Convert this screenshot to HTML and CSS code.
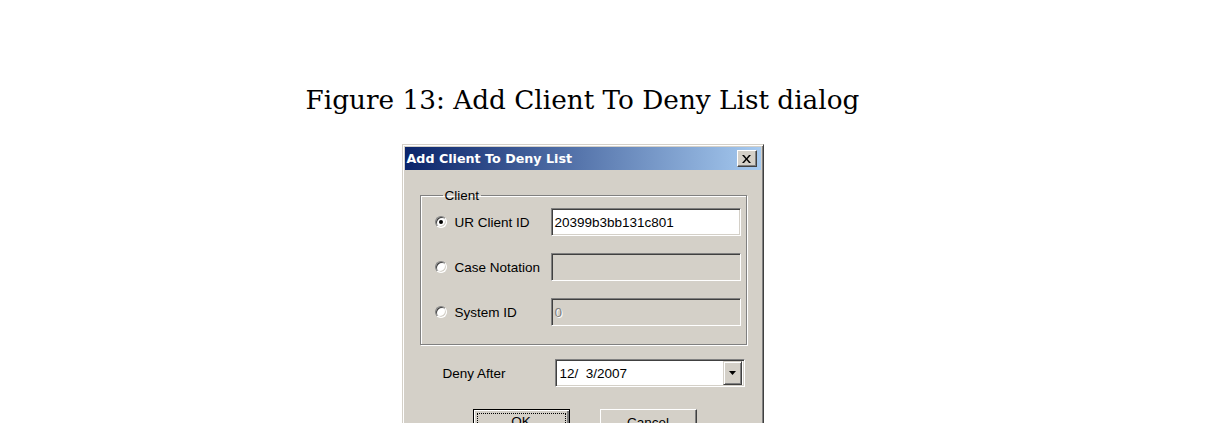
FILE: index.html
```html
<!DOCTYPE html>
<html lang="en">
<head>
    <meta charset="UTF-8">
    <title>Figure 13: Add Client To Deny List dialog</title>
    <link rel="stylesheet" href="styles.css">
</head>
<body>
    <div class="page">
        <p class="caption">Figure 13: Add Client To Deny List dialog</p>

        <div class="dialog">
            <div class="titlebar">
                <span class="title">Add Client To Deny List</span>
                <span class="close-btn">
                    <svg width="9" height="8" viewBox="0 0 9 8">
                        <path d="M0 0h2l2.5 3 2.5-3h2L5.5 4 9 8H7L4.5 5 2 8H0l3.5-4z" fill="#000"/>
                    </svg>
                </span>
            </div>

            <div class="dialog-body">
                <fieldset class="group">
                    <legend>Client</legend>

                    <div class="row">
                        <label class="option"><span class="radio checked"></span>UR Client ID</label>
                        <div class="field">20399b3bb131c801</div>
                    </div>
                    <div class="row">
                        <label class="option"><span class="radio"></span>Case Notation</label>
                        <div class="field disabled"></div>
                    </div>
                    <div class="row">
                        <label class="option"><span class="radio"></span>System ID</label>
                        <div class="field disabled"><span class="greyed">0</span></div>
                    </div>
                </fieldset>

                <div class="deny-row">
                    <span class="deny-label">Deny After</span>
                    <div class="field date">
                        <span class="date-text">12/&nbsp; 3/2007</span>
                        <span class="drop-btn">
                            <svg width="7" height="4" viewBox="0 0 7 4"><path d="M0 0h7L3.5 4z" fill="#000"/></svg>
                        </span>
                    </div>
                </div>

                <div class="buttons">
                    <button class="btn default" type="button"><span class="focus">OK</span></button>
                    <button class="btn" type="button">Cancel</button>
                </div>
            </div>
        </div>
    </div>
</body>
</html>
```

FILE: styles.css
```css
body {
    margin: 0;
    background: #fff;
}
.page {
    width: 1165px;
    padding-top: 85px;
}
.caption {
    margin: 0 0 29px;
    font-family: "DejaVu Serif", serif;
    font-size: 26.3px;
    line-height: 30px;
    text-align: center;
    color: #000;
}
.dialog {
    width: 362px;
    margin: 0 auto;
    box-sizing: border-box;
    background: #d4d0c8;
    border: 1px solid;
    border-color: #d4d0c8 #404040 #404040 #d4d0c8;
    box-shadow: inset 1px 1px 0 #fff, inset -1px -1px 0 #808080;
    padding: 2px;
    font-family: "Liberation Sans", Arial, sans-serif;
    font-size: 13.5px;
    color: #000;
}
.titlebar {
    height: 23px;
    display: flex;
    align-items: center;
    justify-content: space-between;
    padding: 0 4px 0 2px;
    background: linear-gradient(to right, #0a246a, #a6caf0);
}
.title {
    font-family: "DejaVu Sans", sans-serif;
    font-weight: bold;
    font-size: 12.7px;
    color: #fff;
}
.close-btn {
    width: 20px;
    height: 17px;
    box-sizing: border-box;
    display: flex;
    align-items: center;
    justify-content: center;
    background: #d4d0c8;
    border: 1px solid;
    border-color: #fff #404040 #404040 #fff;
    box-shadow: inset -1px -1px 0 #808080;
}
.dialog-body {
    padding: 18px 12px 30px 15px;
}
.group {
    width: 327px;
    box-sizing: border-box;
    margin: 0;
    padding: 5px 5px 18px 14px;
    border: 1px solid #808080;
    box-shadow: 1px 1px 0 #fff, inset 1px 1px 0 #fff;
}
.group legend {
    padding: 0 2px;
    margin-left: 8px;
    line-height: 15px;
}
.row {
    display: grid;
    grid-template-columns: 116px 190px;
    align-items: center;
    height: 28px;
}
.row + .row {
    margin-top: 17px;
}
.option {
    display: flex;
    align-items: center;
    gap: 8px;
}
.radio {
    width: 12px;
    height: 12px;
    box-sizing: border-box;
    border-radius: 50%;
    background: #fff;
    border: 1px solid;
    border-color: #808080 #fff #fff #808080;
    box-shadow: inset 1px 1px 0 #404040, inset -1px -1px 0 #d4d0c8;
    display: flex;
    align-items: center;
    justify-content: center;
}
.radio.checked::after {
    content: "";
    width: 4px;
    height: 4px;
    border-radius: 50%;
    background: #000;
}
.field {
    height: 28px;
    box-sizing: border-box;
    background: #fff;
    border: 1px solid;
    border-color: #808080 #fff #fff #808080;
    box-shadow: inset 1px 1px 0 #404040, inset -1px -1px 0 #d4d0c8;
    padding: 0 3px;
    display: flex;
    align-items: center;
}
.field.disabled {
    background: #d4d0c8;
}
.greyed {
    color: #808080;
    text-shadow: 1px 1px 0 #fff;
}
.deny-row {
    display: grid;
    grid-template-columns: 112px 190px;
    align-items: center;
    padding: 14px 0 0 23px;
}
.field.date {
    justify-content: space-between;
    padding: 2px 2px 2px 4px;
}
.drop-btn {
    width: 19px;
    height: 24px;
    box-sizing: border-box;
    display: flex;
    align-items: center;
    justify-content: center;
    background: #d4d0c8;
    border: 1px solid;
    border-color: #d4d0c8 #404040 #404040 #d4d0c8;
    box-shadow: inset 1px 1px 0 #fff, inset -1px -1px 0 #808080;
}
.buttons {
    display: flex;
    gap: 30px;
    padding: 22px 0 0 53px;
}
.btn {
    width: 97px;
    height: 26px;
    box-sizing: border-box;
    padding: 0;
    font-family: inherit;
    font-size: 13.5px;
    color: #000;
    background: #d4d0c8;
    border: 1px solid;
    border-color: #fff #404040 #404040 #fff;
    box-shadow: inset -1px -1px 0 #808080;
}
.btn.default {
    border: 1px solid #000;
    box-shadow: inset 1px 1px 0 #fff, inset -2px -2px 0 #808080, inset -1px -1px 0 #404040;
    padding: 3px;
}
.focus {
    display: block;
    height: 100%;
    box-sizing: border-box;
    border: 1px dotted #000;
    line-height: 16px;
}
```
